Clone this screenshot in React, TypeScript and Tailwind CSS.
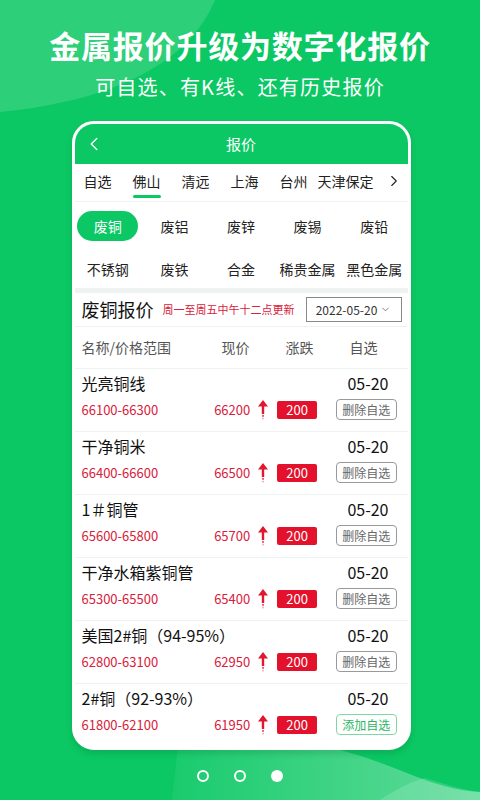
import { ChevronLeft, ChevronRight, ChevronDown } from "lucide-react";

const tabs = ["自选", "佛山", "清远", "上海", "台州"];
const metals = ["废铜", "废铝", "废锌", "废锡", "废铅", "不锈钢", "废铁", "合金", "稀贵金属", "黑色金属"];

const rows = [
  { name: "光亮铜线", range: "66100-66300", price: "66200", added: true },
  { name: "干净铜米", range: "66400-66600", price: "66500", added: true },
  { name: "1＃铜管", range: "65600-65800", price: "65700", added: true },
  { name: "干净水箱紫铜管", range: "65300-65500", price: "65400", added: true },
  { name: "美国2#铜（94-95%）", range: "62800-63100", price: "62950", added: true },
  { name: "2#铜（92-93%）", range: "61800-62100", price: "61950", added: false },
];

const UpArrow = () => (
  <svg width="10" height="20" viewBox="0 0 10 20" className="shrink-0">
    <path d="M5 0 L10 6.5 L6.2 6.5 L6.2 14 L3.8 14 L3.8 6.5 L0 6.5 Z" fill="#e0182f" />
    <rect x="4" y="15" width="2" height="1.8" fill="#e0182f" opacity="0.7" />
    <rect x="4.2" y="17.8" width="1.6" height="1.6" fill="#e0182f" opacity="0.4" />
  </svg>
);

const App = () => {
  return (
    <div
      className="relative w-[480px] h-[800px] overflow-hidden bg-[#0bc864]"
      style={{ fontFamily: '"Noto Sans CJK SC", "Noto Sans", sans-serif' }}
    >
      {/* background swooshes */}
      <svg className="absolute inset-0" width="480" height="800" viewBox="0 0 480 800">
        <defs>
          <linearGradient id="fade" x1="0" y1="0" x2="1" y2="0">
            <stop offset="0" stopColor="#ffffff" stopOpacity="0.06" />
            <stop offset="1" stopColor="#ffffff" stopOpacity="0.35" />
          </linearGradient>
        </defs>
        <path d="M0 0 L215 0 C190 60 120 100 0 112 Z" fill="#ffffff" opacity="0.14" />
        <path d="M172 800 L178 748 L330 748 C390 760 430 790 480 792 L480 800 Z" fill="url(#fade)" />
        <path d="M380 800 C395 790 410 782 425 778 C445 784 462 790 480 792 L480 800 Z" fill="#ffffff" opacity="0.15" />
      </svg>

      <div className="relative flex flex-col items-center">
        {/* heading */}
        <h1 className="mt-[25px] h-[40px] leading-[40px] text-[31px] font-bold text-white tracking-[0.8px]">
          金属报价升级为数字化报价
        </h1>
        <p className="mt-[10px] h-[24px] leading-[24px] text-[20px] text-white tracking-[1.2px]">
          可自选、有K线、还有历史报价
        </p>

        {/* phone card */}
        <div className="mt-[22px] ml-[2px] w-[339px] border-[3px] border-white rounded-[22px] bg-white overflow-hidden shadow-[0_4px_6px_rgba(0,80,30,0.18)]">
          {/* title bar */}
          <div className="relative h-[40px] bg-[#0bc864] flex items-center justify-center">
            <ChevronLeft className="absolute left-[8px] w-[22px] h-[22px] text-white" strokeWidth={1.6} />
            <span className="text-[15px] text-white">报价</span>
          </div>

          {/* city tabs */}
          <div className="h-[38px] flex items-center pl-[9px] pb-[3px] border-b border-[#eef2f1]">
            {tabs.map((t, i) => (
              <div key={t} className={`relative h-full flex items-center ${i === 4 ? "w-[38px]" : "w-[49px]"}`}>
                <span className="text-[14px] text-[#222]">{t}</span>
                {i === 1 && <div className="absolute left-0 bottom-0 w-[28px] h-[3px] bg-[#0bc864] rounded-full" />}
              </div>
            ))}
            <span className="text-[14px] text-[#222]">天津保定</span>
            <ChevronRight className="ml-[11px] w-[18px] h-[18px] text-[#222]" strokeWidth={1.5} />
          </div>

          {/* metal grid */}
          <div className="grid grid-cols-5 gap-y-[13px] pt-[9px] pb-[4px]">
            {metals.map((m, i) => (
              <div key={m} className="h-[30px] flex items-center justify-center">
                {i === 0 ? (
                  <span className="w-[61px] h-[30px] rounded-full bg-[#0bc864] text-white text-[14px] flex items-center justify-center">
                    {m}
                  </span>
                ) : (
                  <span className="text-[14px] text-[#222] whitespace-nowrap">{m}</span>
                )}
              </div>
            ))}
          </div>
          <div className="h-[5px] bg-[#eef2f1]" />

          {/* section header */}
          <div className="h-[34px] flex items-center pl-[7px] pr-[6px] border-b border-[#eef2f1]">
            <span className="text-[18px] text-[#111]">废铜报价</span>
            <span className="ml-[9px] text-[11px] text-[#d9203a]">周一至周五中午十二点更新</span>
            <div className="ml-auto w-[96px] h-[25px] border border-[#888] flex items-center justify-center gap-[3px]">
              <span className="text-[12px] text-[#333]">2022-05-20</span>
              <ChevronDown className="w-[11px] h-[11px] text-[#555]" strokeWidth={1.6} />
            </div>
          </div>

          {/* column headers */}
          <div className="h-[42px] flex items-center pl-[7px] border-b border-[#eef2f1] text-[14px] text-[#555]">
            <span className="w-[140px]">名称/价格范围</span>
            <span className="w-[64px]">现价</span>
            <span className="w-[64px]">涨跌</span>
            <span>自选</span>
          </div>

          {/* rows */}
          {rows.map((r, i) => (
            <div
              key={r.name}
              className={`h-[63px] pl-[7px] pr-[11px] flex flex-col ${i < rows.length - 1 ? "border-b border-[#eef2f1]" : ""}`}
            >
              <div className="mt-[3px] h-[22px] flex items-center justify-between">
                <span className="text-[16px] text-[#111]">{r.name}</span>
                <span className="mr-[8px] text-[16px] text-[#111]">05-20</span>
              </div>
              <div className="mt-[5px] h-[21px] flex items-center">
                <span className="w-[120px] text-[13px] text-[#d9203a]">{r.range}</span>
                <span className="w-[50px] text-right text-[13px] text-[#d9203a]">{r.price}</span>
                <span className="ml-[8px]">
                  <UpArrow />
                </span>
                <span className="ml-[9px] w-[40px] h-[18px] bg-[#e3112b] rounded-[2px] text-white text-[13px] flex items-center justify-center">
                  200
                </span>
                <span
                  className={`ml-[19px] w-[61px] h-[21px] rounded-[4px] border text-[12px] flex items-center justify-center ${
                    r.added ? "border-[#999] text-[#666]" : "border-[#7fd8a4] text-[#28b765]"
                  }`}
                >
                  {r.added ? "删除自选" : "添加自选"}
                </span>
              </div>
            </div>
          ))}
        </div>

        {/* pager dots */}
        <div className="mt-[20px] flex items-center gap-[25px]">
          <span className="w-[12px] h-[12px] rounded-full border-2 border-white" />
          <span className="w-[12px] h-[12px] rounded-full border-2 border-white" />
          <span className="w-[12px] h-[12px] rounded-full bg-white" />
        </div>
      </div>
    </div>
  );
};

export default App;
